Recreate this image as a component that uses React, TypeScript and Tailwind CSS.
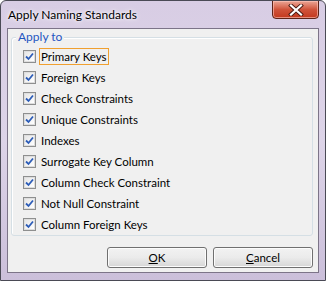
import React from 'react';

const items = [
  'Primary Keys',
  'Foreign Keys',
  'Check Constraints',
  'Unique Constraints',
  'Indexes',
  'Surrogate Key Column',
  'Column Check Constraint',
  'Not Null Constraint',
  'Column Foreign Keys',
];

const CheckBox: React.FC = () => (
  <div className="w-[13px] h-[13px] border border-[#8e8f8f] bg-white flex items-center justify-center shrink-0">
    <div className="w-[11px] h-[11px] border border-[#dedede] bg-gradient-to-br from-[#e6e6e6] to-[#ffffff] flex items-center justify-center">
      <svg width="9" height="9" viewBox="0 0 9 9">
        <path d="M1 4.5 L3.5 7 L8 1.5" fill="none" stroke="#2d5db8" strokeWidth="1.8" />
      </svg>
    </div>
  </div>
);

export default function App() {
  return (
    <div
      className="w-[326px] h-[281px] bg-gradient-to-b from-[#d8cde4] via-[#ddd4e8] to-[#cbbfda] border border-[#4a4a55] rounded-t-[6px] flex flex-col overflow-hidden"
      style={{ fontFamily: 'Lato, "Noto Sans", sans-serif' }}
    >
      {/* Title Bar */}
      <div className="h-[27px] flex items-start justify-between shrink-0">
        <div className="pl-[7px] pt-[7px] text-[12px] leading-[14px] text-black [text-shadow:0_0_6px_#fff,0_0_3px_#fff]">
          Apply Naming Standards
        </div>
        <div className="mr-[6px] w-[47px] h-[19px] -mt-px rounded-b-[4px] border border-[#5e2418] bg-gradient-to-b from-[#eaa595] via-[#d0533a] to-[#c3381c] flex items-center justify-center shadow-[inset_0_0_0_1px_rgba(255,200,190,0.6)]">
          <svg width="16" height="12" viewBox="0 0 16 12">
            <path d="M3 1.5 L13 10.5 M13 1.5 L3 10.5" stroke="#4a1a12" strokeWidth="4" strokeLinecap="square" />
            <path d="M3 1.5 L13 10.5 M13 1.5 L3 10.5" stroke="#ffffff" strokeWidth="2.2" strokeLinecap="square" />
          </svg>
        </div>
      </div>

      {/* Client */}
      <div className="mx-[6px] mb-[7px] flex-1 bg-[#f0f0f0] border border-[#7c7488] flex flex-col px-[3px]">
        {/* Group box */}
        <div className="mt-[8px] ml-0 mr-[2px] h-[199px] relative border border-[#d5dfe5] rounded-[3px] shadow-[inset_1px_1px_0_#fff]">
          <div className="absolute -top-[9px] left-[4px] px-[2px] bg-[#f0f0f0] text-[12px] leading-[16px] text-[#1f56c2]">
            Apply to
          </div>
          <div className="pt-[12px] pl-[11px] flex flex-col gap-[8px]">
            {items.map((label, i) => (
              <div key={label} className="flex items-center gap-[3px] h-[13px]">
                <CheckBox />
                <span
                  className={`text-[11.5px] leading-[15px] text-black px-[1px] ${
                    i === 0 ? 'border border-[#f0a030]' : 'border border-transparent'
                  }`}
                >
                  {label}
                </span>
              </div>
            ))}
          </div>
        </div>

        {/* Buttons */}
        <div className="mt-[11px] flex justify-end gap-[6px] pr-[2px]">
          <button className="w-[100px] h-[21px] rounded-[3px] border border-[#707070] bg-gradient-to-b from-[#f2f2f2] via-[#ebebeb] to-[#d6d6d6] text-[11.5px] text-black shadow-[inset_0_0_0_1px_#fcfcfc]">
            <span className="underline">O</span>K
          </button>
          <button className="w-[100px] h-[21px] rounded-[3px] border border-[#707070] bg-gradient-to-b from-[#f2f2f2] via-[#ebebeb] to-[#d6d6d6] text-[11.5px] text-black shadow-[inset_0_0_0_1px_#fcfcfc]">
            <span className="underline">C</span>ancel
          </button>
        </div>
      </div>
    </div>
  );
}
